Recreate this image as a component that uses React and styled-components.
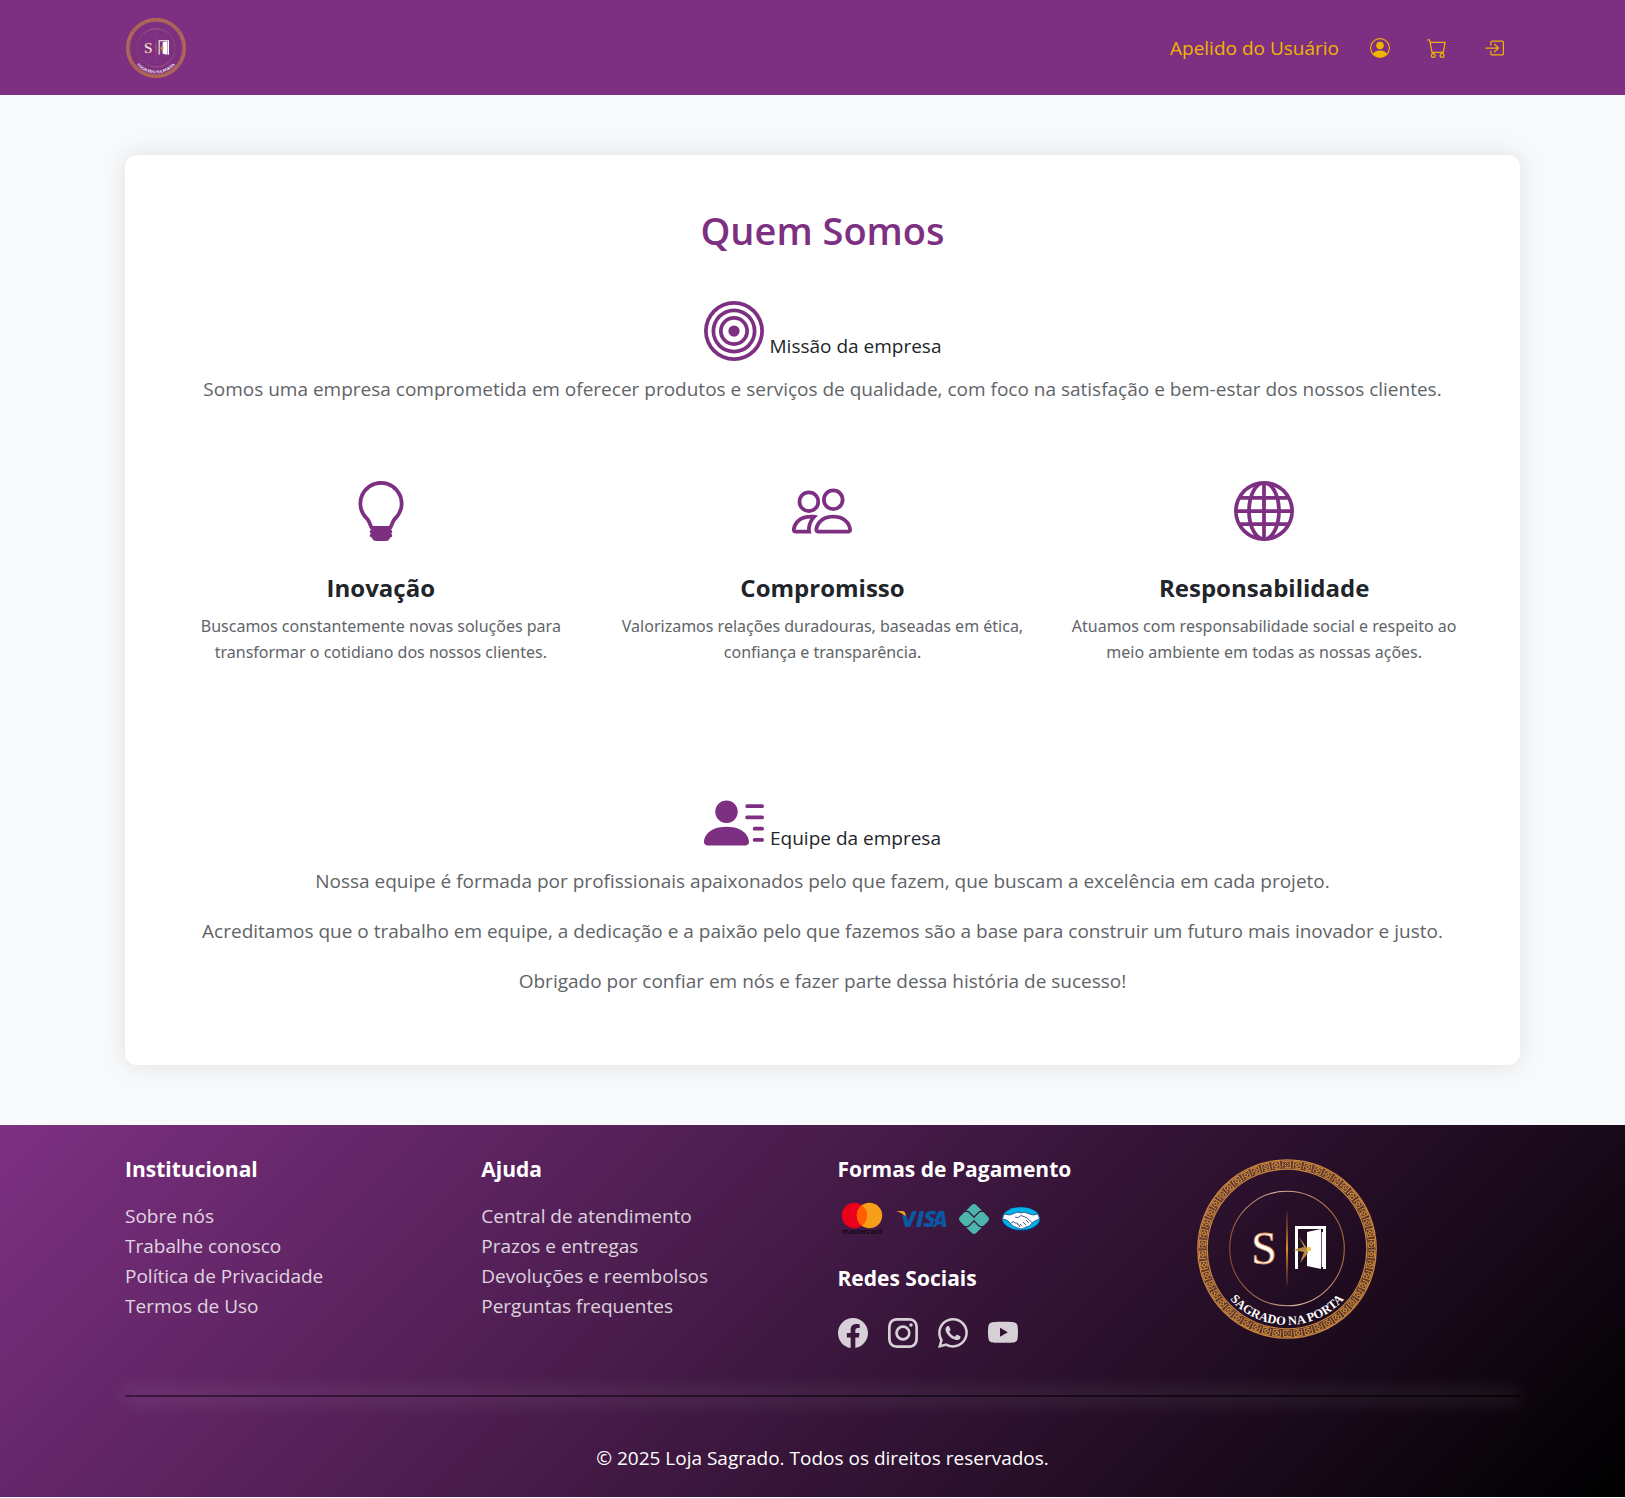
import React from "react";
import styled, { createGlobalStyle } from "styled-components";
import {
  BsPersonCircle, BsCart, BsBoxArrowInRight, BsBullseye, BsLightbulb, BsPeople,
  BsGlobe, BsPersonLinesFill, BsFacebook, BsInstagram, BsWhatsapp, BsYoutube,
} from "react-icons/bs";

const purple = "#7d3082";

const Global = createGlobalStyle`
  *, *::before, *::after { box-sizing: border-box; }
  body {
    margin: 0;
    background: #f8f9fb;
    color: #212529;
    font-family: "Open Sans", "Noto Sans", sans-serif;
    font-size: 19px;
    line-height: 30px;
  }
  h1, h2, h3, p, ul { margin: 0; padding: 0; }
  a { color: inherit; text-decoration: none; }
`;

const Container = styled.div`
  padding: 0 105px 0 125px;
`;

const Header = styled.header`
  background: ${purple};
`;

const Bar = styled(Container)`
  display: flex;
  align-items: center;
  justify-content: space-between;
  height: 95px;
`;

const LogoLink = styled.a`
  display: flex;
  padding-left: 1px;
`;

const Nav = styled.nav`
  display: flex;
  align-items: center;
  gap: 37px;
  padding-right: 16px;
  color: #f0b400;
  svg { display: block; width: 20px; height: 20px; }
`;

const User = styled.span`
  margin-right: -6px;
`;

const Main = styled(Container).attrs({ as: "main" })`
  padding-top: 60px;
  padding-bottom: 60px;
`;

const Card = styled.article`
  display: flex;
  flex-direction: column;
  padding: 49px 35px 69px;
  background: #fff;
  border-radius: 12px;
  box-shadow: 0 0 25px rgba(0, 0, 0, 0.1);
  text-align: center;
`;

const Title = styled.h1`
  color: ${purple};
  font-size: 38px;
  line-height: 52px;
  font-weight: 600;
`;

const Section = styled.section`
  margin-top: ${(p) => p.$top}px;
  p { color: #5f6468; }
`;

const Lead = styled.h2`
  display: flex;
  align-items: flex-end;
  justify-content: center;
  gap: 6px;
  margin-bottom: 13px;
  font-size: 19px;
  line-height: 30px;
  font-weight: 400;
  svg { width: 60px; height: 60px; color: ${purple}; }
`;

const Team = styled.div`
  display: grid;
  gap: 20px;
`;

const Values = styled.div`
  display: grid;
  grid-template-columns: repeat(3, 1fr);
  margin-top: 77px;
`;

const Value = styled.section`
  padding: 0 15px;
  svg { display: block; width: 60px; height: 60px; margin: 0 auto 32px; color: ${purple}; }
  h3 { font-size: 24px; line-height: 30px; font-weight: 700; margin-bottom: 10px; }
  p { color: #5f6468; font-family: "Noto Sans", sans-serif; font-size: 16px; line-height: 26px; }
`;

const Footer = styled.footer`
  background: linear-gradient(135deg, ${purple}, #000);
  color: #fff;
`;

const Columns = styled(Container)`
  display: grid;
  grid-template-columns: repeat(4, 1fr);
  column-gap: 30px;
  padding-top: 28px;
`;

const Heading = styled.h2`
  font-size: 21px;
  line-height: 32px;
  font-weight: 700;
`;

const Links = styled.ul`
  margin-top: 16px;
  list-style: none;
  opacity: 0.8;
`;

const Payments = styled.div`
  display: flex;
  align-items: center;
  gap: 12px;
  height: 50px;
  margin: 9px 0 18px;
  padding-left: 3px;
  svg { display: block; }
`;

const Social = styled.div`
  display: flex;
  gap: 20px;
  margin-top: 24px;
  opacity: 0.8;
  svg { display: block; width: 30px; height: 30px; }
`;

const FooterLogo = styled.div`
  padding: 6px 0 0 3px;
`;

const Rule = styled.hr`
  height: 2px;
  margin: 47px 0 0;
  border: 0;
  background: rgba(0, 0, 0, 0.4);
  box-shadow: 0 0 20px rgba(255, 255, 255, 0.6);
`;

const Copyright = styled.p`
  && { padding: 46px 0 24px; }
  text-align: center;
`;

function Logo({ size, id }) {
  const keys = Array.from({ length: 50 }, (_, i) => i * 7.2);
  return (
    <svg width={size} height={size} viewBox="0 0 180 180" role="img" aria-label="Sagrado na Porta">
      <defs>
        <linearGradient id={id + "thin"} x1="0" y1="0.6" x2="1" y2="0.4">
          <stop offset="0" stopColor="#8a4a2a" />
          <stop offset="0.5" stopColor="#e0b9a0" />
          <stop offset="1" stopColor="#a5673a" />
        </linearGradient>
        <linearGradient id={id + "bar"} x1="0" y1="0" x2="0" y2="1">
          <stop offset="0" stopColor="#a55a30" stopOpacity="0.2" />
          <stop offset="0.5" stopColor="#e08a25" />
          <stop offset="1" stopColor="#a55a30" stopOpacity="0.2" />
        </linearGradient>
        <path id={id + "arc"} d="M14 90 A76 76 0 0 0 166 90" />
      </defs>
      <g fill="none" stroke="#cb8640">
        <circle cx="90" cy="90" r="84.5" strokeWidth="9" opacity="0.35" />
        <circle cx="90" cy="90" r="89.2" strokeWidth="1.3" />
        <circle cx="90" cy="90" r="79.8" strokeWidth="1.2" />
      </g>
      {keys.map((a) => (
        <g key={a} transform={`rotate(${a} 90 90) translate(90 5.5)`} fill="none" stroke="#cf8d3c" strokeWidth="1">
          <path d="M-4.2 3.2V-3.2H3.4V3.2H-2.4" />
          <path d="M-.4 -2L1.8 0L-.4 2L-2.4 0Z" />
        </g>
      ))}
      <circle cx="90" cy="89.5" r="57.3" fill="none" stroke={`url(#${id}thin)`} strokeWidth="1.1" />
      <rect x="89" y="53" width="2" height="73" fill={`url(#${id}bar)`} />
      <text x="67" y="105" textAnchor="middle" fontFamily="Liberation Serif, serif" fontSize="46" fill="#fff" stroke="#d98a4a" strokeWidth="0.8">S</text>
      <path d="M98 110V67h31v43h-3V70h-25v40z" fill="#fff" />
      <path d="M110 73l14-3v40l-14-3z" fill="#fff" />
      <path d="M125.500 73v35" stroke="#fff" strokeWidth="1.6" />
      <path d="M110 89l-8-11 5 10-11 3 11 2-4 11 8-10z" fill="#b98a40" />
      <circle cx="112" cy="90" r="2.2" fill="#f0c050" />
      <text fontFamily="Liberation Serif, serif" fontSize="12.5" fontWeight="700" fill="#fff" textAnchor="middle">
        <textPath href={`#${id}arc`} startOffset="50%">SAGRADO NA PORTA</textPath>
      </text>
    </svg>
  );
}

function Mastercard() {
  return (
    <svg width="42" height="36" viewBox="0 0 42 36" role="img" aria-label="Mastercard">
      <circle cx="13.5" cy="14.5" r="12.7" fill="#eb001b" />
      <circle cx="28.5" cy="14.5" r="12.7" fill="#f79e1b" />
      <path d="M21 4.300a12.700 12.700 0 0 1 0 20.400a12.700 12.700 0 0 1 0-20.400z" fill="#ff5f00" />
      <text x="21" y="33" textAnchor="middle" fontFamily="DejaVu Sans, sans-serif" fontSize="7" fill="#000">mastercard</text>
    </svg>
  );
}

function Visa() {
  return (
    <svg width="52" height="20" viewBox="0 0 52 20" role="img" aria-label="Visa">
      <path d="M1 2h6q3 0 3.500 3l1 5Q9 4 1 2z" fill="#f79e1b" />
      <path d="M7 6L10 18h5L22 2h-4.600L13 12.500L11.500 7zM21 18L24.500 2h4.600l-3.500 16zM41 2.500c-4.500-1.700-11-.6-11 4.500 0 4 5.300 4 5.300 6 0 1.800-4 1.600-6.300.4l-.9 3.700c4.600 1.900 12 .9 12-4.900 0-4-5.400-4.200-5.400-5.800 0-1.400 3.600-1.300 5.400-.4zM45 2h4L51.500 18h-4.200l-.5-2.400h-4.600L41 18H36.500l6.300-14.500Q43.500 2 45 2zm.8 5L43.700 12.300h3z" fill="#0b57a2" fillRule="evenodd" />
    </svg>
  );
}

function Pix() {
  return (
    <svg width="30" height="30" viewBox="0 0 30 30" role="img" aria-label="Pix">
      <g fill="#4db6ac">
        <path d="M7 6.800L12.800 1q2.200-2 4.400 0L23 6.800h-1.500q-1 0-1.800.8l-4 4q-.7.6-1.400 0l-4-4Q9.500 6.800 8.500 6.800z" />
        <path d="M7 23.200L12.800 29q2.200 2 4.400 0L23 23.200h-1.500q-1 0-1.800-.8l-4-4q-.7-.6-1.400 0l-4 4q-.8.8-1.800.8z" />
        <path d="M5.600 8L1 12.800q-2 2.200 0 4.400L5.600 22h2.600q.8 0 1.300-.6l5-5q1-1.400 0-2.800l-5-5Q9 8 8.200 8z" />
        <path d="M24.400 8L29 12.800q2 2.200 0 4.400L24.400 22h-2.600q-.8 0-1.300-.6l-5-5q-1-1.400 0-2.800l5-5q.5-.6 1.300-.6z" />
      </g>
    </svg>
  );
}

function MercadoPago() {
  return (
    <svg width="40" height="26" viewBox="0 0 40 26" role="img" aria-label="Mercado Pago">
      <ellipse cx="20" cy="13" rx="19" ry="12" fill="#0a3a7a" />
      <ellipse cx="20" cy="12.5" rx="18.7" ry="11.3" fill="#00b1ea" />
      <path d="M3 8q6 2.500 11-1 3-1.500 6 0 3-1.500 6 0 6 3.500 11 1l1.500 5q-4 1-7.500 4-2 4-6 4-4 3.500-8 1-5-1-8-5Q6 13 1.500 13z" fill="#fff" stroke="#1d3a73" strokeWidth="0.7" />
      <path d="M14 11q3 2 6-1.500 6 1 11 7M19 18l2 2M22 16l3 3M25 14l3 3M10 17q2-3 4 0 3-1 3 2 2 0 2 2" fill="none" stroke="#1d3a73" strokeWidth="0.8" />
    </svg>
  );
}

const values = [
  [BsLightbulb, "Inovação", "Buscamos constantemente novas soluções para transformar o cotidiano dos nossos clientes."],
  [BsPeople, "Compromisso", "Valorizamos relações duradouras, baseadas em ética, confiança e transparência."],
  [BsGlobe, "Responsabilidade", "Atuamos com responsabilidade social e respeito ao meio ambiente em todas as nossas ações."],
];

const menus = [
  ["Institucional", ["Sobre nós", "Trabalhe conosco", "Política de Privacidade", "Termos de Uso"]],
  ["Ajuda", ["Central de atendimento", "Prazos e entregas", "Devoluções e reembolsos", "Perguntas frequentes"]],
];

const socials = [[BsFacebook, "Facebook"], [BsInstagram, "Instagram"], [BsWhatsapp, "WhatsApp"], [BsYoutube, "YouTube"]];

export default function App() {
  return (
    <>
      <Global />
      <Header>
        <Bar>
          <LogoLink href="#"><Logo size={60} id="top" /></LogoLink>
          <Nav>
            <User>Apelido do Usuário</User>
            <a href="#" aria-label="Perfil"><BsPersonCircle /></a>
            <a href="#" aria-label="Carrinho"><BsCart /></a>
            <a href="#" aria-label="Entrar"><BsBoxArrowInRight /></a>
          </Nav>
        </Bar>
      </Header>
      <Main>
        <Card>
          <Title>Quem Somos</Title>
          <Section $top={45}>
            <Lead><BsBullseye />Missão da empresa</Lead>
            <p>Somos uma empresa comprometida em oferecer produtos e serviços de qualidade, com foco na satisfação e bem-estar dos nossos clientes.</p>
          </Section>
          <Values>
            {values.map(([Icon, name, text]) => (
              <Value key={name}>
                <Icon />
                <h3>{name}</h3>
                <p>{text}</p>
              </Value>
            ))}
          </Values>
          <Section $top={128}>
            <Lead><BsPersonLinesFill />Equipe da empresa</Lead>
            <Team>
              <p>Nossa equipe é formada por profissionais apaixonados pelo que fazem, que buscam a excelência em cada projeto.</p>
              <p>Acreditamos que o trabalho em equipe, a dedicação e a paixão pelo que fazemos são a base para construir um futuro mais inovador e justo.</p>
              <p>Obrigado por confiar em nós e fazer parte dessa história de sucesso!</p>
            </Team>
          </Section>
        </Card>
      </Main>
      <Footer>
        <Columns>
          {menus.map(([title, items]) => (
            <nav key={title} aria-label={title}>
              <Heading>{title}</Heading>
              <Links>{items.map((t) => <li key={t}><a href="#">{t}</a></li>)}</Links>
            </nav>
          ))}
          <div>
            <Heading>Formas de Pagamento</Heading>
            <Payments><Mastercard /><Visa /><Pix /><MercadoPago /></Payments>
            <Heading>Redes Sociais</Heading>
            <Social>
              {socials.map(([Icon, name]) => <a key={name} href="#" aria-label={name}><Icon /></a>)}
            </Social>
          </div>
          <FooterLogo><Logo size={180} id="foot" /></FooterLogo>
        </Columns>
        <Container>
          <Rule />
          <Copyright>© 2025 Loja Sagrado. Todos os direitos reservados.</Copyright>
        </Container>
      </Footer>
    </>
  );
}
